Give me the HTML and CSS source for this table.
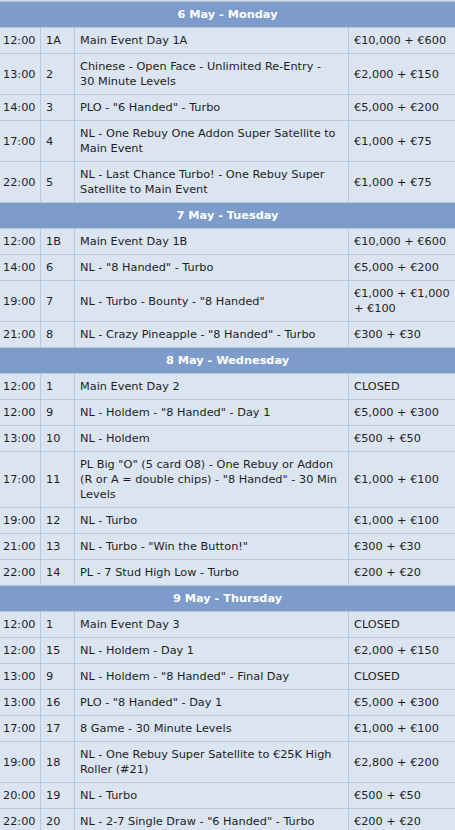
FILE: index.html
```html
<!DOCTYPE html>
<html>
<head>
<meta charset="utf-8">
<link rel="stylesheet" href="styles.css">
</head>
<body>
<table class="schedule">
<colgroup><col class="c-time"><col class="c-num"><col class="c-event"><col class="c-price"></colgroup>
<tbody>
<tr class="day"><td colspan="4">6 May - Monday</td></tr>
<tr><td>12:00</td><td>1A</td><td>Main Event Day 1A</td><td>€10,000 + €600</td></tr>
<tr><td>13:00</td><td>2</td><td>Chinese - Open Face - Unlimited Re-Entry - 30&nbsp;Minute Levels</td><td>€2,000 + €150</td></tr>
<tr><td>14:00</td><td>3</td><td>PLO - "6 Handed" - Turbo</td><td>€5,000 + €200</td></tr>
<tr><td>17:00</td><td>4</td><td>NL - One Rebuy One Addon Super Satellite to Main Event</td><td>€1,000 + €75</td></tr>
<tr><td>22:00</td><td>5</td><td>NL - Last Chance Turbo! - One Rebuy Super Satellite to Main Event</td><td>€1,000 + €75</td></tr>
<tr class="day"><td colspan="4">7 May - Tuesday</td></tr>
<tr><td>12:00</td><td>1B</td><td>Main Event Day 1B</td><td>€10,000 + €600</td></tr>
<tr><td>14:00</td><td>6</td><td>NL - "8 Handed" - Turbo</td><td>€5,000 + €200</td></tr>
<tr><td>19:00</td><td>7</td><td>NL - Turbo - Bounty - "8 Handed"</td><td>€1,000 + €1,000 + €100</td></tr>
<tr><td>21:00</td><td>8</td><td>NL - Crazy Pineapple - "8 Handed" - Turbo</td><td>€300 + €30</td></tr>
<tr class="day"><td colspan="4">8 May - Wednesday</td></tr>
<tr><td>12:00</td><td>1</td><td>Main Event Day 2</td><td>CLOSED</td></tr>
<tr><td>12:00</td><td>9</td><td>NL - Holdem - "8 Handed" - Day 1</td><td>€5,000 + €300</td></tr>
<tr><td>13:00</td><td>10</td><td>NL - Holdem</td><td>€500 + €50</td></tr>
<tr><td>17:00</td><td>11</td><td>PL Big "O" (5 card O8) - One Rebuy or Addon (R or A = double chips) - "8 Handed" - 30 Min Levels</td><td>€1,000 + €100</td></tr>
<tr><td>19:00</td><td>12</td><td>NL - Turbo</td><td>€1,000 + €100</td></tr>
<tr><td>21:00</td><td>13</td><td>NL - Turbo - "Win the Button!"</td><td>€300 + €30</td></tr>
<tr><td>22:00</td><td>14</td><td>PL - 7 Stud High Low - Turbo</td><td>€200 + €20</td></tr>
<tr class="day"><td colspan="4">9 May - Thursday</td></tr>
<tr><td>12:00</td><td>1</td><td>Main Event Day 3</td><td>CLOSED</td></tr>
<tr><td>12:00</td><td>15</td><td>NL - Holdem - Day 1</td><td>€2,000 + €150</td></tr>
<tr><td>13:00</td><td>9</td><td>NL - Holdem - "8 Handed" - Final Day</td><td>CLOSED</td></tr>
<tr><td>13:00</td><td>16</td><td>PLO - "8 Handed" - Day 1</td><td>€5,000 + €300</td></tr>
<tr><td>17:00</td><td>17</td><td>8 Game - 30 Minute Levels</td><td>€1,000 + €100</td></tr>
<tr><td>19:00</td><td>18</td><td>NL - One Rebuy Super Satellite to €25K High Roller (#21)</td><td>€2,800 + €200</td></tr>
<tr><td>20:00</td><td>19</td><td>NL - Turbo</td><td>€500 + €50</td></tr>
<tr><td>22:00</td><td>20</td><td>NL - 2-7 Single Draw - "6 Handed" - Turbo</td><td>€200 + €20</td></tr>
</tbody>
</table>
</body>
</html>
```
FILE: styles.css
```css
html, body {
  margin: 0;
  padding: 0;
  background: #ccd8e9;
  overflow: hidden;
}

.schedule {
  margin: 1px 0 0 -1px;
  width: 457px;
  table-layout: fixed;
  border-collapse: separate;
  border-spacing: 1px;
  background: #b7c7dd;
  font-family: "DejaVu Sans", Verdana, sans-serif;
  font-size: 11.3px;
  line-height: 15px;
  color: #1e1e1e;
}

.c-time { width: 40px; }
.c-num { width: 33px; }
.c-event { width: 273px; }
.c-price { width: 106px; }

.schedule td {
  background: #dbe4f1;
  padding: 5px;
  vertical-align: middle;
  text-align: left;
}

.schedule td:first-child {
  padding-left: 3px;
  padding-right: 2px;
}

.schedule td:nth-child(3) {
  padding-right: 8px;
}

.schedule tr.day td {
  background: #7d9ccb;
  color: #ffffff;
  font-weight: bold;
  text-align: center;
  padding: 5px;
}
```
